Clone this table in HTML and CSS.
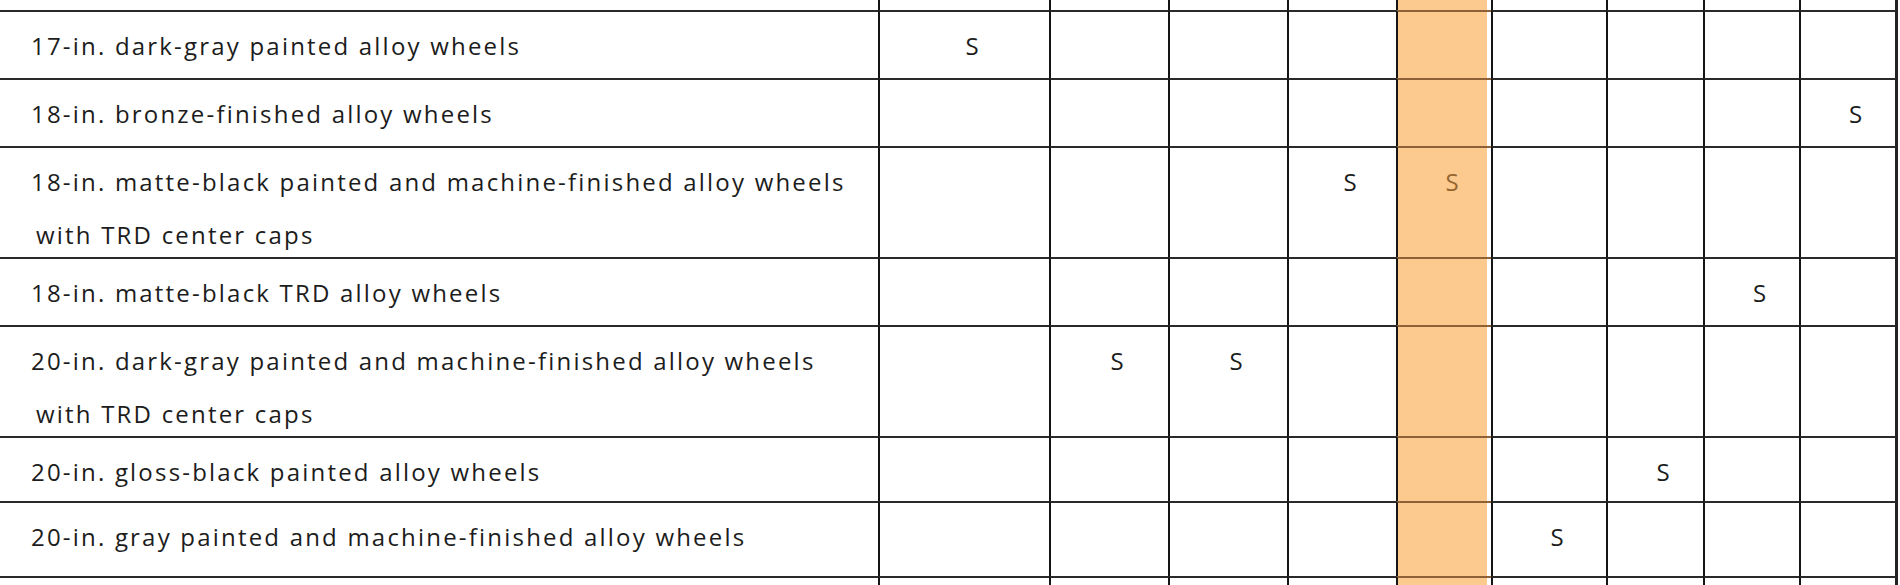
FILE: index.html
```html
<!DOCTYPE html>
<html lang="en">
<head>
<meta charset="utf-8">
<title>Wheels comparison</title>
<link rel="stylesheet" href="styles.css">
</head>
<body>
<div class="grid" role="table">
  <!-- cut-off row above -->
  <div class="c edge-top label"></div><div class="c edge-top"></div><div class="c edge-top"></div><div class="c edge-top"></div><div class="c edge-top"></div><div class="c edge-top hl"></div><div class="c edge-top"></div><div class="c edge-top"></div><div class="c edge-top"></div><div class="c edge-top last"></div>

  <div class="c label"><div class="desc">17-in. dark-gray painted alloy wheels</div></div><div class="c">S</div><div class="c"></div><div class="c"></div><div class="c"></div><div class="c hl"></div><div class="c"></div><div class="c"></div><div class="c"></div><div class="c last"></div>

  <div class="c label"><div class="desc">18-in. bronze-finished alloy wheels</div></div><div class="c"></div><div class="c"></div><div class="c"></div><div class="c"></div><div class="c hl"></div><div class="c"></div><div class="c"></div><div class="c"></div><div class="c last">S</div>

  <div class="c label"><div class="desc two">18-in. matte-black painted and machine-finished alloy wheels<span class="cont">with TRD center caps</span></div></div><div class="c"></div><div class="c"></div><div class="c"></div><div class="c">S</div><div class="c hl">S</div><div class="c"></div><div class="c"></div><div class="c"></div><div class="c last"></div>

  <div class="c label"><div class="desc">18-in. matte-black TRD alloy wheels</div></div><div class="c"></div><div class="c"></div><div class="c"></div><div class="c"></div><div class="c hl"></div><div class="c"></div><div class="c"></div><div class="c">S</div><div class="c last"></div>

  <div class="c label"><div class="desc two">20-in. dark-gray painted and machine-finished alloy wheels<span class="cont">with TRD center caps</span></div></div><div class="c"></div><div class="c">S</div><div class="c">S</div><div class="c"></div><div class="c hl"></div><div class="c"></div><div class="c"></div><div class="c"></div><div class="c last"></div>

  <div class="c label"><div class="desc">20-in. gloss-black painted alloy wheels</div></div><div class="c"></div><div class="c"></div><div class="c"></div><div class="c"></div><div class="c hl"></div><div class="c"></div><div class="c">S</div><div class="c"></div><div class="c last"></div>

  <div class="c label"><div class="desc">20-in. gray painted and machine-finished alloy wheels</div></div><div class="c"></div><div class="c"></div><div class="c"></div><div class="c"></div><div class="c hl"></div><div class="c">S</div><div class="c"></div><div class="c"></div><div class="c last"></div>

  <!-- cut-off row below -->
  <div class="c label"></div><div class="c"></div><div class="c"></div><div class="c"></div><div class="c"></div><div class="c hl"></div><div class="c"></div><div class="c"></div><div class="c"></div><div class="c last"></div>
</div>
</body>
</html>
```

FILE: styles.css
```css
html, body {
  margin: 0;
  padding: 0;
  background: #ffffff;
  overflow: hidden;
}

body {
  font-family: "Open Sans", "Noto Sans", sans-serif;
  font-size: 24px;
  color: #1c1c1c;
}

.grid {
  display: grid;
  grid-template-columns: 878px 171px 119px 119px 109px 95px 115px 97px 96px 99px;
  grid-template-rows: 10px 68px 68px 111px 68px 111px 65px 75px 20px;
  width: 1899px;
}

.c {
  box-sizing: border-box;
  border-top: 2px solid #2a2a2a;
  border-left: 2px solid #151515;
  padding: 7px 0 0 15px;
  line-height: 53px;
  text-align: center;
  overflow: visible;
  min-width: 0;
}

.c.edge-top {
  border-top: none;
  padding: 0;
}

.c.label {
  border-left: none;
  text-align: left;
  padding: 7px 0 0 31px;
}

.c.last {
  border-right: 3px solid #222;
}

.c.hl {
  background: linear-gradient(to right, #fcc98f calc(100% - 4px), #ffffff calc(100% - 4px));
  border-top-color: #8d6038;
  color: #94662f;
}

.c.hl.edge-top {
  border-top: none;
}

.desc {
  white-space: nowrap;
  letter-spacing: 2.2px;
}

.desc.two {
  margin-bottom: -6px;
}

.cont {
  display: block;
  padding-left: 5px;
}
```
